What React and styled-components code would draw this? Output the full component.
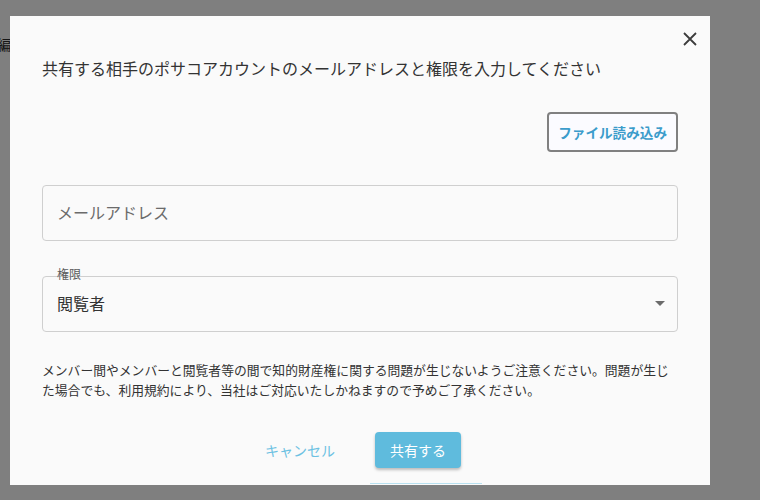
import React from "react";
import styled, { createGlobalStyle } from "styled-components";

const GlobalStyle = createGlobalStyle`
  html, body {
    margin: 0;
    padding: 0;
    background: #ffffff;
    font-family: "Noto Sans CJK JP", "Noto Sans", sans-serif;
  }
  * {
    box-sizing: border-box;
  }
`;

const Page = styled.div`
  width: 760px;
  height: 500px;
  padding-top: 34px;
  overflow: hidden;
`;

const PageTitle = styled.div`
  margin-left: -3px;
  font-size: 14px;
  color: #2a2a2a;
`;

const Overlay = styled.div`
  position: fixed;
  inset: 0;
  background: rgba(0, 0, 0, 0.5);
  padding: 16px 0 15px 10px;
`;

const Dialog = styled.div`
  position: relative;
  width: 700px;
  height: 100%;
  background: #fafafa;
  padding: 40px 32px 0;
  overflow: hidden;
`;

const CloseButton = styled.button`
  position: absolute;
  top: 10px;
  right: 7px;
  width: 26px;
  height: 26px;
  padding: 0;
  border: none;
  background: none;
  display: flex;
  align-items: center;
  justify-content: center;
  cursor: pointer;
`;

const Title = styled.h2`
  margin: 0;
  font-size: 16px;
  line-height: 24px;
  font-weight: 400;
  color: #333333;
`;

const ToolRow = styled.div`
  display: flex;
  justify-content: flex-end;
  margin-top: 32px;
`;

const FileButton = styled.button`
  height: 40px;
  padding: 0 9px;
  border: 2px solid #808080;
  border-radius: 4px;
  background: #fbfbff;
  color: #3b9ccb;
  font-family: inherit;
  font-size: 13.6px;
  font-weight: 700;
  cursor: pointer;
`;

const TextField = styled.input`
  display: block;
  width: 100%;
  height: 56px;
  margin-top: 33px;
  padding: 0 14px 2px;
  border: 1px solid #cfcfcf;
  border-radius: 4px;
  background: #fafafa;
  font-family: inherit;
  font-size: 16px;
  color: #333;
  outline: none;

  &::placeholder {
    color: #6b6b6b;
  }
`;

const SelectField = styled.div`
  position: relative;
  margin-top: 35px;
  height: 56px;
  border: 1px solid #cfcfcf;
  border-radius: 4px;
  display: flex;
  align-items: center;
  padding: 0 14px 2px;
`;

const FieldLabel = styled.span`
  position: absolute;
  top: -10px;
  left: 14px;
  font-size: 12px;
  line-height: 14px;
  color: #5c5c5c;
`;

const SelectValue = styled.span`
  flex: 1;
  font-size: 16px;
  color: #333333;
`;

const Caret = styled.span`
  width: 0;
  height: 0;
  margin-right: -2px;
  border-left: 5px solid transparent;
  border-right: 5px solid transparent;
  border-top: 5px solid #6b6b6b;
`;

const Notice = styled.p`
  margin: 28px 0 0;
  font-size: 12.8px;
  line-height: 20px;
  color: #333333;
`;

const Actions = styled.div`
  display: flex;
  justify-content: center;
  gap: 24px;
  margin-top: 32px;
  padding-right: 10px;
`;

const TextButton = styled.button`
  height: 36px;
  padding: 0 16px;
  border: none;
  background: none;
  color: #6cc1e2;
  font-family: inherit;
  font-size: 14px;
  cursor: pointer;
`;

const PrimaryButton = styled.button`
  height: 36px;
  padding: 0 15px;
  border: none;
  border-radius: 4px;
  background: #5fbbdd;
  color: #ffffff;
  font-family: inherit;
  font-size: 14px;
  box-shadow: 0 2px 3px rgba(0, 0, 0, 0.25);
  cursor: pointer;
`;

const NextRow = styled.div`
  display: flex;
  justify-content: center;
  margin-top: 15px;
  padding-left: 132px;
`;

const NextEdge = styled.div`
  width: 112px;
  height: 20px;
  border-top: 1px solid #b9e1f0;
`;

export default function App() {
  return (
    <>
      <GlobalStyle />
      <Page>
        <PageTitle>編集</PageTitle>
      </Page>
      <Overlay>
        <Dialog>
          <CloseButton aria-label="閉じる">
            <svg width="14" height="14" viewBox="0 0 14 14">
              <path d="M1 1 L13 13 M13 1 L1 13" stroke="#3c3c3c" strokeWidth="1.8" />
            </svg>
          </CloseButton>
          <Title>共有する相手のポサコアカウントのメールアドレスと権限を入力してください</Title>
          <ToolRow>
            <FileButton>ファイル読み込み</FileButton>
          </ToolRow>
          <TextField placeholder="メールアドレス" />
          <SelectField>
            <FieldLabel>権限</FieldLabel>
            <SelectValue>閲覧者</SelectValue>
            <Caret />
          </SelectField>
          <Notice>
            メンバー間やメンバーと閲覧者等の間で知的財産権に関する問題が生じないようご注意ください。問題が生じた場合でも、利用規約により、当社はご対応いたしかねますので予めご了承ください。
          </Notice>
          <Actions>
            <TextButton>キャンセル</TextButton>
            <PrimaryButton>共有する</PrimaryButton>
          </Actions>
          <NextRow>
            <NextEdge />
          </NextRow>
        </Dialog>
      </Overlay>
    </>
  );
}
